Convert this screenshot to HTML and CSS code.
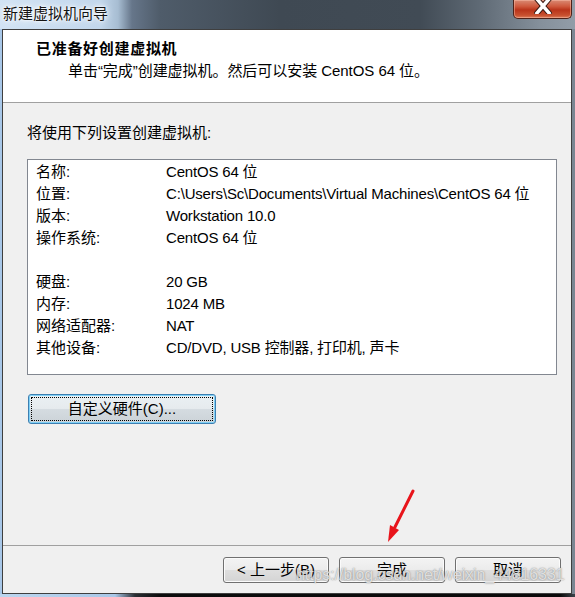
FILE: index.html
```html
<!DOCTYPE html>
<html lang="zh-CN">
<head>
<meta charset="utf-8">
<title>新建虚拟机向导</title>
<link rel="stylesheet" href="styles.css">
</head>
<body>
<div class="window">
  <div class="titlebar">
    <span class="title">新建虚拟机向导</span>
    <div class="close">
      <svg width="18" height="14" viewBox="0 0 18 14">
        <path d="M3 -1 L15 13 M15 -1 L3 13" stroke="#3a1a14" stroke-width="5.5" stroke-linecap="square" fill="none"/>
        <path d="M3 -1 L15 13 M15 -1 L3 13" stroke="#ffffff" stroke-width="3.5" stroke-linecap="square" fill="none"/>
      </svg>
    </div>
  </div>
  <div class="frame">
    <div class="client">
      <div class="header">
        <div class="h-title">已准备好创建虚拟机</div>
        <div class="h-sub">单击“完成”创建虚拟机。然后可以安装 CentOS 64 位。</div>
      </div>
      <div class="content">
        <div class="intro">将使用下列设置创建虚拟机:</div>
        <div class="listbox">
          <div class="row"><span class="k">名称:</span><span class="v">CentOS 64 位</span></div>
          <div class="row"><span class="k">位置:</span><span class="v">C:\Users\Sc\Documents\Virtual Machines\CentOS 64 位</span></div>
          <div class="row"><span class="k">版本:</span><span class="v">Workstation 10.0</span></div>
          <div class="row"><span class="k">操作系统:</span><span class="v">CentOS 64 位</span></div>
          <div class="row"></div>
          <div class="row"><span class="k">硬盘:</span><span class="v">20 GB</span></div>
          <div class="row"><span class="k">内存:</span><span class="v">1024 MB</span></div>
          <div class="row"><span class="k">网络适配器:</span><span class="v">NAT</span></div>
          <div class="row"><span class="k">其他设备:</span><span class="v">CD/DVD, USB 控制器, 打印机, 声卡</span></div>
        </div>
        <button class="btn custom"><span class="focus">自定义硬件(C)...</span></button>
      </div>
      <div class="footer">
        <button class="btn">&lt; 上一步(B)</button>
        <button class="btn">完成</button>
        <button class="btn">取消</button>
      </div>
    </div>
  </div>
  <svg class="arrow" width="50" height="70" viewBox="375 480 50 70">
    <line x1="413" y1="491" x2="395" y2="527" stroke="#e8141b" stroke-width="3" stroke-linecap="round"/>
    <polygon points="388,542 390,525 399,530" fill="#e8141b"/>
  </svg>
  <div class="watermark">https://blog.csdn.net/weixin_44816331</div>
</div>
</body>
</html>
```

FILE: styles.css
```css
html, body {
  margin: 0;
  padding: 0;
}

body {
  width: 575px;
  height: 597px;
  overflow: hidden;
  font-family: "Liberation Sans", "Noto Sans CJK SC", sans-serif;
  font-size: 15px;
  color: #000;
}

.window {
  position: relative;
  width: 575px;
  height: 597px;
  background: linear-gradient(90deg, #bcd6ef 0, #a9c8e8 115px, #2a2e33 135px, #0c0c0c 160px, #0a0a0a 560px, #3c434a 575px);
}

.titlebar {
  height: 29px;
  display: flex;
  justify-content: space-between;
  align-items: flex-start;
  background: linear-gradient(90deg, #d2e3f4 0, #c2d7ec 100px, #a7bdd2 118px, #66768a 132px, #4f5c6a 160px, #3f4953 280px, #414b55 420px, #5f6a75 480px, #85909b 540px, #929da8 575px);
}

.title {
  padding-left: 3px;
  line-height: 27px;
  font-size: 15px;
  color: #141414;
  text-shadow: 0 0 4px #fff, 0 0 8px #fff, 0 0 2px #fff;
}

.close {
  width: 57px;
  height: 18px;
  margin-right: 3px;
  border: 1px solid #4e2219;
  border-top: none;
  border-radius: 0 0 5px 5px;
  background: linear-gradient(#d98a74 0, #cf5a3e 35%, #b9341a 55%, #c8502f 85%, #dc7e5c 100%);
  box-shadow: inset 0 0 0 1px rgba(255, 200, 180, 0.45);
  display: flex;
  justify-content: center;
  align-items: flex-start;
}

.frame {
  height: 565px;
  padding: 0 3px 0 2px;
  background: linear-gradient(90deg, #a8c7e8 0, #a8c7e8 2px, #6b7783 2px, #7a8692 575px);
}

.client {
  height: 565px;
  box-sizing: border-box;
  border: 1px solid #3f3f3f;
  background: #f0f0f0;
  display: flex;
  flex-direction: column;
}

.header {
  flex: none;
  background: #fff;
  border-bottom: 1px solid #a0a0a0;
  padding: 9px 0 0 33px;
  box-sizing: border-box;
  height: 73px;
}

.h-title {
  font-weight: bold;
  font-size: 15px;
  line-height: 20px;
  letter-spacing: 0.7px;
}

.h-sub {
  margin-top: 2px;
  padding-left: 32px;
  line-height: 20px;
  letter-spacing: -0.05px;
}

.content {
  flex: 1;
  padding: 20px 0 0 24px;
  display: flex;
  flex-direction: column;
  align-items: flex-start;
}

.intro {
  line-height: 20px;
}

.listbox {
  margin-top: 16px;
  width: 530px;
  height: 216px;
  box-sizing: border-box;
  border: 1px solid #828790;
  background: #fff;
  padding: 1px 0 0 8px;
}

.row {
  height: 22px;
  line-height: 22px;
  display: flex;
  white-space: nowrap;
}

.k {
  width: 130px;
  flex: none;
}

.v {
  letter-spacing: -0.18px;
}

.btn {
  font-family: inherit;
  font-size: 15px;
  color: #000;
  height: 26px;
  width: 106px;
  box-sizing: border-box;
  border: 1px solid #707070;
  border-radius: 3px;
  background: linear-gradient(#f3f3f3 0, #ececec 48%, #dedede 52%, #d4d4d4 100%);
  box-shadow: inset 0 0 0 1px #fbfbfb;
  padding: 0;
  line-height: 22px;
}

.custom {
  margin: 19px 0 0 1px;
  width: 188px;
  height: 30px;
  border-color: #3c7fb1;
  box-shadow: inset 0 0 0 1px #7fd0f6;
  background: linear-gradient(#eaf0f3 0, #e6ebee 48%, #d4dbe0 52%, #ccd3d8 100%);
  padding: 2px;
  display: flex;
}

.focus {
  flex: 1;
  border: 1px dotted #000;
  display: flex;
  align-items: center;
  justify-content: center;
  line-height: 22px;
}

.footer {
  flex: none;
  height: 48px;
  box-sizing: border-box;
  border-top: 1px solid #a0a0a0;
  padding: 11px 10px 0 0;
  display: flex;
  justify-content: flex-end;
  align-items: flex-start;
  gap: 10px;
}

.arrow {
  position: absolute;
  left: 375px;
  top: 480px;
}

.watermark {
  position: absolute;
  left: 296px;
  top: 565px;
  font-family: "Liberation Sans", sans-serif;
  font-size: 16px;
  line-height: 20px;
  letter-spacing: -0.1px;
  color: rgba(255, 255, 255, 0.72);
  text-shadow: 0 0 1px rgba(90, 90, 90, 0.6), 0 0 2px rgba(120, 120, 120, 0.4);
  white-space: nowrap;
}
```
